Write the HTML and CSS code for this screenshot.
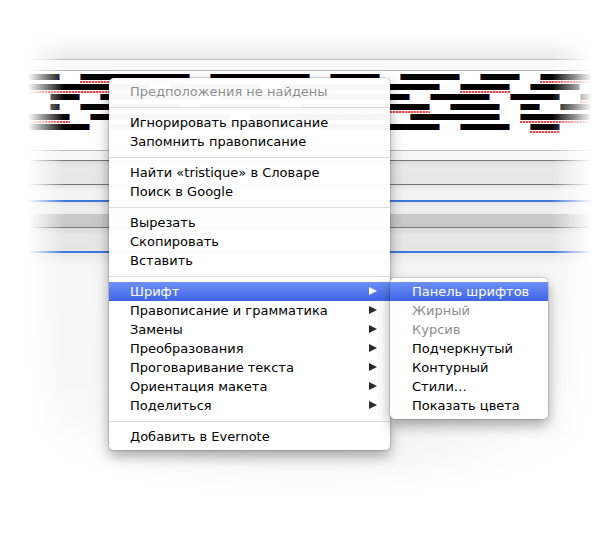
FILE: index.html
```html
<!DOCTYPE html>
<html lang="ru">
<head>
<meta charset="utf-8">
<title>Context menu</title>
<link rel="stylesheet" href="styles.css">
</head>
<body>
<div class="scene">
  <div class="window">
    <div class="topshade"></div>
    <div class="hline l1"></div>
    <div class="band b1"></div>
    <div class="hline l2"></div>
    <div class="textarea">
      <div class="row">
        <span class="bar" style="margin-left:0;width:60px"></span>
        <span class="bar u" style="margin-left:20px;width:110px"></span>
        <span class="bar" style="margin-left:20px;width:100px"></span>
        <span class="bar" style="margin-left:20px;width:50px"></span>
        <span class="bar" style="margin-left:20px;width:60px"></span>
        <span class="bar" style="margin-left:20px;width:40px"></span>
        <span class="bar u" style="margin-left:20px;width:70px"></span>
      </div>
      <div class="row">
        <span class="bar u" style="margin-left:0;width:150px"></span>
        <span class="bar" style="margin-left:20px;width:90px"></span>
        <span class="bar" style="margin-left:20px;width:160px"></span>
        <span class="bar u" style="margin-left:20px;width:50px"></span>
        <span class="bar" style="margin-left:20px;width:50px"></span>
        <span class="bar" style="margin-left:20px;width:40px"></span>
      </div>
      <div class="row">
        <span class="bar" style="margin-left:50px;width:30px"></span>
        <span class="bar" style="margin-left:20px;width:100px"></span>
        <span class="bar" style="margin-left:20px;width:190px"></span>
        <span class="bar" style="margin-left:20px;width:60px"></span>
        <span class="bar" style="margin-left:20px;width:50px"></span>
        <span class="bar u" style="margin-left:20px;width:40px"></span>
      </div>
      <div class="row">
        <span class="bar" style="margin-left:50px;width:10px"></span>
        <span class="bar" style="margin-left:20px;width:100px"></span>
        <span class="bar" style="margin-left:20px;width:80px"></span>
        <span class="bar u" style="margin-left:20px;width:130px"></span>
        <span class="bar" style="margin-left:20px;width:50px"></span>
        <span class="bar" style="margin-left:20px;width:20px"></span>
        <span class="bar" style="margin-left:20px;width:60px"></span>
      </div>
      <div class="row">
        <span class="bar u" style="margin-left:0;width:70px"></span>
        <span class="bar" style="margin-left:20px;width:140px"></span>
        <span class="bar" style="margin-left:20px;width:140px"></span>
        <span class="bar" style="margin-left:20px;width:90px"></span>
        <span class="bar u" style="margin-left:20px;width:70px"></span>
      </div>
      <div class="row">
        <span class="bar" style="margin-left:0;width:90px"></span>
        <span class="bar" style="margin-left:20px;width:90px"></span>
        <span class="bar" style="margin-left:20px;width:80px"></span>
        <span class="bar" style="margin-left:20px;width:120px"></span>
        <span class="bar" style="margin-left:20px;width:50px"></span>
        <span class="bar u" style="margin-left:20px;width:30px"></span>
      </div>
    </div>
    <div class="hline l3"></div>
    <div class="band b2"></div>
    <div class="hline dark"></div>
    <div class="band b3"></div>
    <div class="hline dark"></div>
    <div class="band b4"></div>
    <div class="blue"></div>
    <div class="band b5"></div>
    <div class="band b6"></div>
    <div class="hline dark"></div>
    <div class="band b7"></div>
    <div class="blue"></div>
    <div class="band rest"></div>
  </div>
  <div class="floor"></div>

  <div class="menu main">
    <div class="item disabled">Предположения не найдены</div>
    <div class="sep"></div>
    <div class="item">Игнорировать правописание</div>
    <div class="item">Запомнить правописание</div>
    <div class="sep"></div>
    <div class="item">Найти «tristique» в Словаре</div>
    <div class="item">Поиск в Google</div>
    <div class="sep"></div>
    <div class="item">Вырезать</div>
    <div class="item">Скопировать</div>
    <div class="item">Вставить</div>
    <div class="sep"></div>
    <div class="item sub active">Шрифт<span class="arrow"></span></div>
    <div class="item sub">Правописание и грамматика<span class="arrow"></span></div>
    <div class="item sub">Замены<span class="arrow"></span></div>
    <div class="item sub">Преобразования<span class="arrow"></span></div>
    <div class="item sub">Проговаривание текста<span class="arrow"></span></div>
    <div class="item sub">Ориентация макета<span class="arrow"></span></div>
    <div class="item sub">Поделиться<span class="arrow"></span></div>
    <div class="sep"></div>
    <div class="item">Добавить в Evernote</div>
  </div>

  <div class="menu submenu">
    <div class="item active">Панель шрифтов</div>
    <div class="item disabled">Жирный</div>
    <div class="item disabled">Курсив</div>
    <div class="item">Подчеркнутый</div>
    <div class="item">Контурный</div>
    <div class="item">Стили…</div>
    <div class="item">Показать цвета</div>
  </div>
</div>
</body>
</html>
```

FILE: styles.css
```css
html, body {
  margin: 0;
  padding: 0;
  background: #ffffff;
}

.scene {
  position: relative;
  width: 611px;
  height: 533px;
  overflow: hidden;
  background: #ffffff;
}

.window {
  display: flex;
  flex-direction: column;
  width: 611px;
  -webkit-mask-image: linear-gradient(to right, transparent 28px, #000 64px, #000 552px, transparent 592px);
  mask-image: linear-gradient(to right, transparent 28px, #000 64px, #000 552px, transparent 592px);
}

.topshade {
  margin-top: 30px;
  height: 29px;
  background: linear-gradient(to bottom, rgba(0,0,0,0) 0%, rgba(0,0,0,0.02) 45%, rgba(0,0,0,0.09) 100%);
}

.hline { height: 1px; }
.l1 { background: #bdbdbd; }
.l2 { background: #b3b3b3; }
.l3 { background: #b9b9b9; }
.hline.dark { background: #767676; }

.band { flex: none; }
.b1 { height: 10px; background: #f8f8f8; }
.b2 { height: 9px; background: #f6f6f6; }
.b3 { height: 23px; background: linear-gradient(#dcdcdc, #e8e8e8 25%, #e6e6e6); }
.b4 { height: 15px; background: linear-gradient(#e2e2e2, #f3f3f3 40%, #f2f2f2); }
.b5 { height: 12px; background: linear-gradient(#e4e4e4, #eeeeee 40%); }
.b6 { height: 13px; background: #c9c9c9; }
.b7 { height: 23px; background: linear-gradient(#d9d9d9, #e7e7e7 30%, #e5e5e5); }
.rest { height: 190px; background: linear-gradient(#e8e8e8, #f6f6f6 12px, #f8f8f8 70%, #ffffff); }

.blue {
  height: 2px;
  background: #3f78dc;
  box-shadow: 0 1px 1px rgba(63,120,220,0.35);
}

.textarea {
  background: #ffffff;
  padding-top: 3px;
  height: 76px;
}

.row {
  display: flex;
  height: 10px;
  align-items: flex-start;
}

.bar {
  position: relative;
  flex: none;
  height: 6px;
  box-sizing: border-box;
  background: #050303;
  border-left: 1px solid #b85a10;
  border-right: 1px solid #2f72e0;
}

.bar.u::after {
  content: "";
  position: absolute;
  left: -1px;
  right: -1px;
  top: 7px;
  height: 2px;
  background: repeating-linear-gradient(to right, #f04848 0 2px, #f8b8b8 2px 3px);
}

.floor {
  position: absolute;
  left: 40px;
  top: 395px;
  width: 540px;
  height: 115px;
  background: radial-gradient(ellipse 52% 60% at 50% 30%, rgba(0,0,0,0.065), rgba(0,0,0,0.025) 60%, rgba(0,0,0,0) 100%);
}

.menu {
  position: absolute;
  box-sizing: border-box;
  padding: 4px 0;
  background: rgba(255,255,255,0.97);
  border-radius: 5px;
  box-shadow: 0 0 0 1px rgba(0,0,0,0.13), 0 6px 14px rgba(0,0,0,0.35);
  font-family: "DejaVu Sans", "Liberation Sans", sans-serif;
  font-size: 13px;
  color: #000000;
}

.main {
  left: 109px;
  top: 78px;
  width: 281px;
}

.submenu {
  left: 390px;
  top: 278px;
  width: 158px;
}

.item {
  position: relative;
  height: 19px;
  line-height: 19px;
  padding-left: 21px;
  white-space: nowrap;
}

.submenu .item { padding-left: 22px; }

.item.disabled { color: #8e8e8e; }

.item.active {
  color: #ffffff;
  background: linear-gradient(#6f90f4, #3e64e8);
}

.sep {
  height: 1px;
  margin: 6px 0 5px;
  background: #dedede;
}

.arrow {
  position: absolute;
  left: 260px;
  top: 5px;
  width: 0;
  height: 0;
  border-top: 4.5px solid transparent;
  border-bottom: 4.5px solid transparent;
  border-left: 8px solid #2a2a2a;
}

.item.active .arrow { border-left-color: #ffffff; }
```
